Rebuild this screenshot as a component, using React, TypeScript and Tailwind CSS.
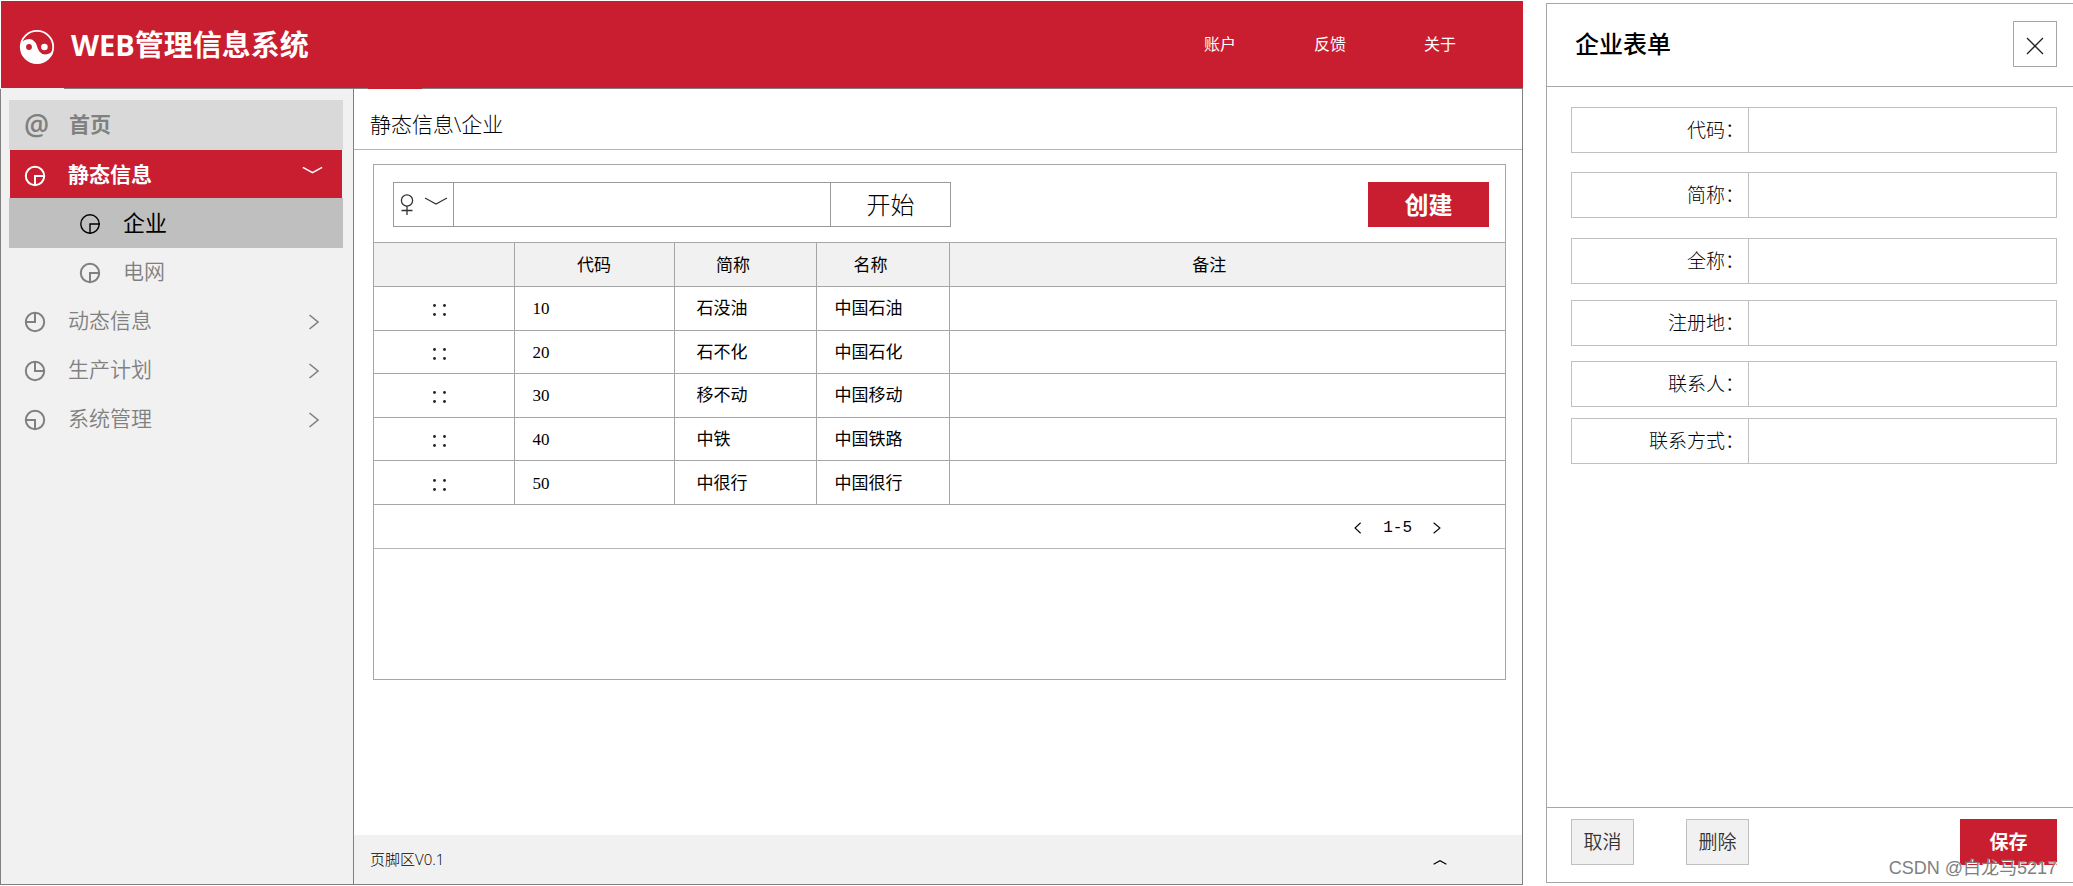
import React from 'react';

const SANS = "font-['Open_Sans','Noto_Sans_CJK_SC',sans-serif]";

type Quadrant = 'br' | 'tl' | 'tr' | 'bl';

const quadrantPath: Record<Quadrant, string> = {
  br: 'M20 10H10V20',
  tl: 'M0.5 10H10V0.5',
  tr: 'M10 0.5V10H19.5',
  bl: 'M0.5 10H10V19.5',
};

function QuadrantIcon({ quadrant, thin }: { quadrant: Quadrant; thin?: boolean }) {
  return (
    <svg width="22" height="22" viewBox="-1 -1 22 22" fill="none" stroke="currentColor" strokeWidth={thin ? 1.4 : 2} aria-hidden="true">
      <circle cx="10" cy="10" r="9.2" />
      <path d={quadrantPath[quadrant]} />
    </svg>
  );
}

function Logo() {
  return (
    <svg width="36" height="36" viewBox="0 0 36 36" aria-hidden="true">
      <circle cx="18" cy="18" r="16.2" fill="none" stroke="#fff" strokeWidth="1.8" />
      <path d="M1.5 18A8.3 8.3 0 0 1 16.2 13.2C18.4 16 18 19.2 20.4 22.4A7.9 7.9 0 0 0 34.5 18A16.5 16.5 0 0 1 1.5 18Z" fill="#fff" />
      <circle cx="10" cy="18" r="2.9" fill="#c81e30" />
      <circle cx="25.4" cy="18" r="3.3" fill="#fff" />
    </svg>
  );
}

function WideChevron({ width, height, stroke = 1.6 }: { width: number; height: number; stroke?: number }) {
  return (
    <svg width={width} height={height} viewBox="0 0 24 8" fill="none" stroke="currentColor" strokeWidth={stroke} aria-hidden="true">
      <path d="M1 1L12 7L23 1" />
    </svg>
  );
}

function Angle({ left, size, stroke }: { left?: boolean; size: number; stroke: number }) {
  return (
    <svg width={size} height={size} viewBox="0 0 16 16" fill="none" stroke="currentColor" strokeWidth={stroke} aria-hidden="true">
      <path d={left ? 'M11.5 1L4 8L11.5 15' : 'M3.5 1L12 8L3.5 15'} />
    </svg>
  );
}

function Header() {
  return (
    <header className="mt-px ml-px flex h-[87px] items-center bg-[#c81e30] pr-[67px] pl-[18px] text-white">
      <div className="flex items-center gap-4 pt-1">
        <Logo />
        <h1 className="pb-1 text-[29px] leading-10 font-bold">WEB管理信息系统</h1>
      </div>
      <nav className="ml-auto flex gap-[78px] pb-px text-base">
        <a href="#account">账户</a>
        <a href="#feedback">反馈</a>
        <a href="#about">关于</a>
      </nav>
    </header>
  );
}

const sections: { label: string; quadrant: Quadrant }[] = [
  { label: '动态信息', quadrant: 'tl' },
  { label: '生产计划', quadrant: 'tr' },
  { label: '系统管理', quadrant: 'bl' },
];

function Sidebar() {
  return (
    <nav className="w-[353px] shrink-0 border-r border-[#808080] bg-[#f1f1f1] pt-[11px] pr-2.5 pl-2 text-[21px] leading-7 text-[#808080]">
      <a href="#home" className="flex h-[50px] items-center bg-[#d9d9d9] pb-0.5 font-bold">
        <span className="w-[60px] pl-[15px] text-[28px] font-semibold">@</span>
        首页
      </a>
      <a href="#static" className="mx-px flex h-12 items-center bg-[#c81e30] pr-[19px] pl-3.5 font-bold text-white">
        <span className="w-11 pt-1">
          <QuadrantIcon quadrant="br" />
        </span>
        静态信息
        <span className="ml-auto pb-2">
          <WideChevron width={21} height={8} stroke={1.8} />
        </span>
      </a>
      <a href="#company" className="flex h-[50px] items-center bg-[#bfbfbf] pb-0.5 pl-[70px] text-[22px] text-black">
        <span className="w-11 pt-1">
          <QuadrantIcon quadrant="br" thin />
        </span>
        企业
      </a>
      <a href="#grid" className="flex h-[49px] items-center pb-1 pl-[70px] font-[350]">
        <span className="w-11 pt-1">
          <QuadrantIcon quadrant="br" />
        </span>
        电网
      </a>
      {sections.map((s) => (
        <a key={s.label} href={`#${s.quadrant}`} className="flex h-[49px] items-center pr-[21px] pb-1 pl-[15px] font-[350]">
          <span className="w-11 pt-1">
            <QuadrantIcon quadrant={s.quadrant} />
          </span>
          {s.label}
          <span className="ml-auto pt-1">
            <Angle size={16} stroke={1.6} />
          </span>
        </a>
      ))}
    </nav>
  );
}

const rows = [
  ['10', '石没油', '中国石油'],
  ['20', '石不化', '中国石化'],
  ['30', '移不动', '中国移动'],
  ['40', '中铁', '中国铁路'],
  ['50', '中很行', '中国很行'],
];

function DragDots() {
  return (
    <svg className="mx-auto" width="24" height="14" viewBox="0 0 24 14" fill="#222" aria-hidden="true">
      <circle cx="2.5" cy="2.5" r="1.4" />
      <circle cx="12.5" cy="2.5" r="1.4" />
      <circle cx="2.5" cy="11.5" r="1.4" />
      <circle cx="12.5" cy="11.5" r="1.4" />
    </svg>
  );
}

function DataTable() {
  return (
    <table className="h-[263px] w-full table-fixed border-collapse text-[17px] leading-6 text-black">
      <colgroup>
        <col className="w-[140px]" />
        <col className="w-[160px]" />
        <col className="w-[142px]" />
        <col className="w-[133px]" />
        <col />
      </colgroup>
      <thead>
        <tr className="h-11 border-y border-[#a6a6a6] bg-[#f1f1f1]">
          <th className="border-r border-[#a6a6a6]" aria-label="排序" />
          <th className="border-r border-[#a6a6a6] font-normal">代码</th>
          <th className="border-r border-[#a6a6a6] pr-6 font-normal">简称</th>
          <th className="border-r border-[#a6a6a6] pr-6 font-normal">名称</th>
          <th className="pr-9 font-normal">备注</th>
        </tr>
      </thead>
      <tbody>
        {rows.map(([code, short, name]) => (
          <tr key={code} className="border-b border-[#a6a6a6]">
            <td className="border-r border-[#a6a6a6] pt-1">
              <DragDots />
            </td>
            <td className="border-r border-[#a6a6a6] pt-0.5 pl-[18px] font-['Liberation_Serif',serif]">{code}</td>
            <td className="border-r border-[#a6a6a6] pl-[22px]">{short}</td>
            <td className="border-r border-[#a6a6a6] pl-[18px]">{name}</td>
            <td />
          </tr>
        ))}
      </tbody>
    </table>
  );
}

function Content() {
  return (
    <main className="flex min-w-0 flex-1 flex-col bg-white">
      <div className="flex h-[61px] items-center border-b border-[#b5b5b5] pt-3 pl-4 text-[21px] font-light text-black">静态信息\企业</div>
      <section className="mt-3.5 mr-4 ml-[19px] h-[516px] border border-[#a6a6a6]">
        <div className="flex h-[77px] items-center pt-0.5 pr-4 pl-[19px]">
          <div className="flex h-[45px] border border-[#999] text-[#333]">
            <button type="button" aria-label="筛选条件" className="flex w-[60px] items-center border-r border-[#999] pl-1.5">
              <svg width="14" height="22" viewBox="0 0 14 22" fill="none" stroke="currentColor" strokeWidth="1.3" aria-hidden="true">
                <circle cx="7" cy="6.5" r="5.6" />
                <path d="M7 12V21M1.5 16.5H12.5" />
              </svg>
              <span className="ml-2.5 pb-2">
                <WideChevron width={24} height={8} stroke={1.2} />
              </span>
            </button>
            <input aria-label="搜索" className="w-[376px] min-w-0 px-3 text-xl outline-none" />
            <button type="button" className="w-[120px] border-l border-[#999] text-2xl font-light text-black">
              开始
            </button>
          </div>
          <button type="button" className="ml-auto h-[45px] w-[121px] bg-[#c81e30] text-2xl font-bold text-white">
            创建
          </button>
        </div>
        <DataTable />
        <div className="flex h-11 items-center justify-end gap-[19px] border-b border-[#b5b5b5] pt-0.5 pr-[62px] text-base text-black">
          <button type="button" aria-label="上一页">
            <Angle left size={12} stroke={1.4} />
          </button>
          <span className="font-['Liberation_Mono',monospace]">1-5</span>
          <button type="button" aria-label="下一页">
            <Angle size={12} stroke={1.4} />
          </button>
        </div>
      </section>
      <footer className="mt-auto flex h-[49px] items-center bg-[#f1f1f1] pr-[75px] pl-4 text-[15px] font-light text-black">
        页脚区V0.1
        <button type="button" aria-label="展开页脚" className="ml-auto rotate-180 pb-1.5">
          <WideChevron width={14} height={5} stroke={2} />
        </button>
      </footer>
    </main>
  );
}

const fields = [
  { id: 'code', label: '代码', gap: 'mt-0' },
  { id: 'short', label: '简称', gap: 'mt-[19px]' },
  { id: 'full', label: '全称', gap: 'mt-5' },
  { id: 'place', label: '注册地', gap: 'mt-4' },
  { id: 'contact', label: '联系人', gap: 'mt-[15px]' },
  { id: 'method', label: '联系方式', gap: 'mt-[11px]' },
];

function CompanyForm() {
  return (
    <form className="mt-[3px] mb-[3px] ml-[23px] flex w-[527px] shrink-0 flex-col border-y border-l border-[#a6a6a6] bg-white" onSubmit={(e) => e.preventDefault()}>
      <div className="flex h-[83px] items-center justify-between border-b border-[#a6a6a6] pr-4 pb-0.5 pl-7">
        <h2 className="text-2xl font-medium text-black">企业表单</h2>
        <button type="button" aria-label="关闭" className="flex h-[46px] w-11 items-center justify-center border border-[#a6a6a6] pt-1">
          <svg width="18" height="18" viewBox="0 0 18 18" stroke="#222" strokeWidth="1.3" aria-hidden="true">
            <path d="M1 1L17 17M17 1L1 17" />
          </svg>
        </button>
      </div>
      <div className="flex-1 pt-5 pr-4 pl-6">
        {fields.map((f) => (
          <div key={f.id} className={`flex h-[46px] border border-[#c0c0c0] ${f.gap}`}>
            <label htmlFor={f.id} className="flex w-[177px] items-center justify-end border-r border-[#c0c0c0] pr-1 text-[19px] font-light text-black">
              {f.label}：
            </label>
            <input id={f.id} className="min-w-0 flex-1 px-3 text-lg outline-none" />
          </div>
        ))}
      </div>
      <div className="flex h-[75px] items-start border-t border-[#a6a6a6] pt-[11px] pr-4 pl-6 text-[19px]">
        <button type="button" className="h-[46px] w-[63px] border border-[#c0c0c0] bg-[#f1f1f1] font-[350] text-[#333]">
          取消
        </button>
        <button type="button" className="ml-[52px] h-[46px] w-[63px] border border-[#c0c0c0] bg-[#f1f1f1] font-[350] text-[#333]">
          删除
        </button>
        <button type="submit" className="ml-auto h-[46px] w-[97px] bg-[#c81e30] font-bold text-white">
          保存
        </button>
      </div>
    </form>
  );
}

export default function App() {
  return (
    <div className={`relative flex min-h-screen bg-white ${SANS}`}>
      <div className="flex min-w-0 flex-1 flex-col pb-px">
        <Header />
        <div className="flex h-px">
          <div className="w-16 bg-[#f1f1f1]" />
          <div className="w-[304px] bg-[#808080]" />
          <div className="w-[54px] bg-[#c81e30]" />
          <div className="flex-1 bg-[#808080]" />
        </div>
        <div className="flex flex-1 border-x border-b border-[#808080]">
          <Sidebar />
          <Content />
        </div>
      </div>
      <CompanyForm />
      <p className="absolute right-4 bottom-1.5 font-['Liberation_Sans','Noto_Sans_CJK_SC',sans-serif] text-lg leading-6 text-[#808080] [text-shadow:1px_1px_0_#ffffff]">
        CSDN @白龙马5217
      </p>
    </div>
  );
}
